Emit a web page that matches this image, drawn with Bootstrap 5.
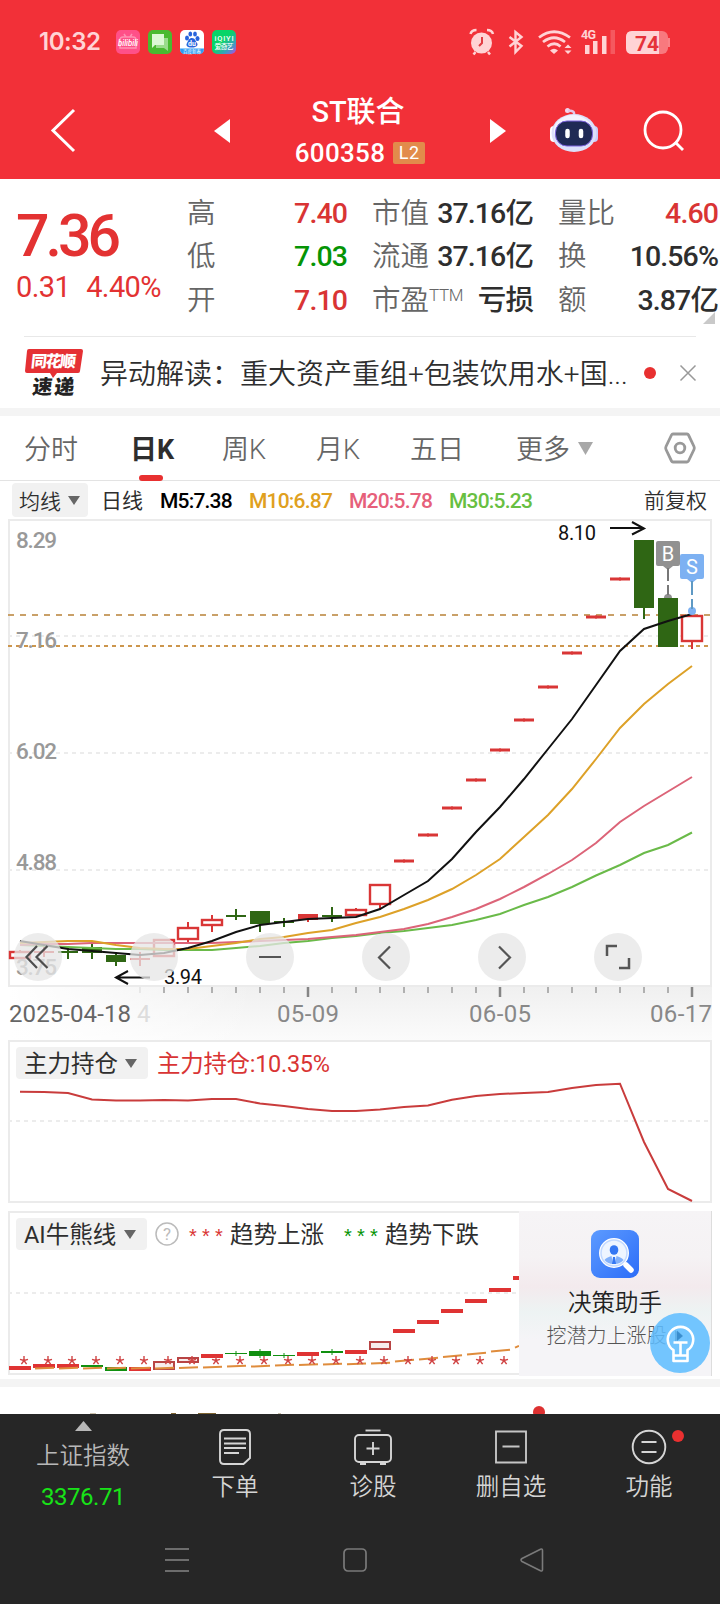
<!DOCTYPE html>
<html lang="zh-CN">
<head>
<meta charset="utf-8">
<meta name="viewport" content="width=device-width, initial-scale=1">
<title>ST联合 600358</title>
<link href="https://cdn.jsdelivr.net/npm/bootstrap@5.3.0/dist/css/bootstrap.min.css" rel="stylesheet">
<style>
body{width:720px;height:1604px;overflow:hidden;background:#fff;color:#2e2e2e;font-family:Roboto,"Noto Sans CJK SC",sans-serif;line-height:1}
svg{display:block;flex:none;overflow:visible}
.app-head{background:#f23038;height:179px}
.status-row{height:83px;padding:0 50px 0 39px;color:#ffd3d5}
.clock{font:600 24px Inter,Roboto,sans-serif;letter-spacing:-.5px;width:77px}
.head-row{height:96px;padding:0 35px 0 50px}
.stock-name{font-size:29px;font-weight:500;line-height:32px;margin-left:-4px}
.stock-code{font-size:26px;font-weight:500;letter-spacing:.3px}
.l2-tag{background:#e28b4b;border-radius:2px;width:32px;height:22px;font-size:18px;letter-spacing:.5px}
.quote-box{height:157px}
.price-col{width:187px;padding:32px 0 0 16px;color:#e33232}
.price-now{font-size:59px;font-weight:500;letter-spacing:-4px;line-height:50px}
.price-chg{font-size:29px;letter-spacing:-.6px;margin-top:10px;line-height:32px;gap:16px}
.q-col{padding-top:13px}
.q-line{height:43.6px;font-size:28.5px}
.q-line>span:first-child{color:#666;font-weight:350}
.q-val{font-weight:500;letter-spacing:-.9px}
.up{color:#d93434}.down{color:#059405}
.ttm{font-size:17px;position:relative;top:-9px;letter-spacing:-.3px}
.ticker{height:72px;margin:0 24px;border-top:1px solid #e8e8e8}
.ticker-text{font-size:28px;font-weight:350;margin-left:16px;width:531px;padding-top:4px}
.band{height:8px;background:#f4f4f4}
.k-tabs{height:65px;border-bottom:1px solid #e3e3e3;font-size:27px;color:#666;padding:0 24px 0 24px}
.k-tabs .nav-link{color:#666;padding:4px 0 0;font-weight:350}
.k-tabs .active{color:#2e2e2e;font-weight:700;position:relative}
.k-tabs .active::after{content:"";position:absolute;left:9px;top:42px;width:24px;height:6px;border-radius:3px;background:#e83030}
.ma-row{height:38px;font-size:21px;padding:0 13px 0 12px}
.ma-row>span:not(.pill){padding-top:2px}
.ma-row .ma{font-weight:500;letter-spacing:-.8px}
.pill{background:#f1f1f1;border-radius:4px}
.chart-box{position:relative;height:521px}
.tools{position:absolute;left:14px;top:414px;gap:68px}
.tool{width:48px;height:48px;border-radius:50%;background:rgba(230,230,230,.76);padding:0;border:0}
.sub-box{position:relative}
.legend-row{position:absolute;left:16px;top:7px;height:32px;font-size:23.5px;white-space:nowrap}
.legend-row .pill{height:32px}
.legend-row b,.legend-row>span:not(.pill){font-weight:400;position:relative;top:2px}
.legend-row>.stars{font:700 20px "Liberation Sans",sans-serif;letter-spacing:5.2px;top:5px}
.helper-card{position:absolute;left:519px;top:0;width:193px;height:165px;background:linear-gradient(#f6f4f6 0,#f5f2f4 28%,#f3eaed 46%,#edf3f3 61%,#f5f4f7 78%);border-right:1px solid #ddd}
.helper-name{font-size:23.5px;font-weight:350;margin-top:14px;color:#222}
.helper-tip{font-size:20px;font-weight:300;color:#555;margin-top:10px;margin-left:-2px;gap:8px}
.bulb{position:absolute;left:650px;top:102px}
.peek{height:27px;overflow:hidden;position:relative}
.peek i{position:absolute;left:533px;top:19px;width:12px;height:12px;border-radius:50%;background:#dd3131}
.peek b{position:absolute;top:26px;height:1px;background:#7d6330}
.bottom-bar{background:#262626;height:190px;color:#d5d5d5;font-size:23.5px;font-weight:350}
.bar-items{height:100px}
.bar-item{width:138px}
.bar-item>span{margin-top:11px}
.index-item{width:166px;color:#b8b8b8}
.index-val{color:#18e318;font-size:24px;font-weight:400;letter-spacing:-.5px;margin-top:16px}
.dot{position:absolute;width:12px;height:12px;border-radius:50%;background:#ea3030}
</style>
</head>
<body>
<header class="app-head">
  <div class="status-row d-flex align-items-center">
    <span class="clock">10:32</span>
    <svg width="121" height="24" viewBox="0 0 121 24">
      <defs><linearGradient id="iq" x1="0" y1="0" x2="1" y2="1"><stop offset=".45" stop-color="#08d468"/><stop offset=".75" stop-color="#3c9ebe"/><stop offset="1" stop-color="#bd43e5"/></linearGradient></defs>
      <rect width="24" height="24" rx="5" fill="#ff5088"/><path d="M8 4l2 3M16 4l-2 3M4 10q0-3 3-3h10q3 0 3 3v8H4z" fill="none" stroke="#ff91b3" stroke-width="1.500"/><text x="2" y="16" font-size="9" font-weight="500" font-style="italic" fill="#fff" textLength="20" lengthAdjust="spacingAndGlyphs">bilibili</text>
      <rect x="32" width="24" height="24" rx="5" fill="#49ba30"/><path d="M40 8h12v13l-4-3h-8z" fill="#9adc8c"/><path d="M36 4h12v11h-9l-3 3z" fill="#dcf8d5"/>
      <rect x="64" width="24" height="24" rx="5" fill="#fff"/><path d="M64 18.500h24q0 5.500-5 5.500H69q-5 0-5-5.500z" fill="#2c9cf4"/><g fill="#2864dc"><ellipse cx="71" cy="8" rx="2" ry="2.600"/><ellipse cx="74.300" cy="4" rx="1.900" ry="2.500"/><ellipse cx="79" cy="4" rx="1.900" ry="2.500"/><ellipse cx="81.500" cy="8.500" rx="2" ry="2.600"/><path d="M76 8c3 0 3.500 3 5 5s0 4.500-5 4.500-6.500-2-5-4.500 2-5 5-5z"/></g><text x="76" y="15.500" text-anchor="middle" font-size="7" font-weight="700" fill="#fff">du</text><text x="76" y="23" text-anchor="middle" font-size="4.500" fill="#fff">百度新春</text>
      <rect x="96" width="24" height="24" rx="5" fill="url(#iq)"/><text x="98.500" y="11" font-size="7.500" font-weight="500" fill="#fff" textLength="19">iQIYI</text><text x="98.500" y="19" font-size="7" font-weight="500" fill="#fff" textLength="19">爱奇艺</text>
    </svg>
    <svg class="ms-auto" width="201" height="26" viewBox="469 28 201 26" fill="none" stroke="#ffd3d5" stroke-width="2">
      <circle cx="481.500" cy="42" r="10.500" fill="#ffd3d5" stroke="none"/><path d="M470.500 33q1-4 6-4M493 33q-1-4-6-4M475.500 51l-2 2.500M488 51l2 2.500" stroke-width="2.500"/><path d="M482 36v6l-3 3" stroke="#e23b42"/>
      <path d="M509.500 36l12 9-6 6V31l6 5-12 9.500" stroke-width="2.400"/>
      <path d="M539 36.500q15-11.500 31 0M543 41q11-8.500 22 0M547.500 45.500q7-5.500 13 0" stroke-width="2.700"/><path d="M550 49.500q4-3.500 8 0l-4 3.500z" fill="#ffd3d5" stroke="none"/><path d="M564.500 47l3.500-3.500 3.500 3.500zM564.500 49.500l3.500 3.500 3.500-3.500z" fill="#ffd3d5" stroke="none"/>
      <g fill="#ffd3d5" stroke="none"><text x="581" y="38" font-size="12.500" font-weight="700" textLength="15">4G</text><path d="M585 44h4.500v9H585zM593 40h4.500v13H593zM602 35h4.500v18H602z"/><path d="M610.500 29h4.500v24h-4.500z" opacity=".25"/>
      <rect x="626" y="30" width="42" height="23" rx="6" opacity=".45"/><path d="M632 30h27v23h-27q-6 0-6-6V36q0-6 6-6z"/><path d="M668 37h2v9h-2z" opacity=".5"/></g>
      <text x="635" y="49.500" font-size="21" font-weight="700" fill="#e5323a" stroke="none" textLength="24">74</text>
    </svg>
  </div>
  <div class="head-row d-flex align-items-center text-white">
    <svg style="margin-top:-3px" width="26" height="44" viewBox="0 0 26 44" fill="none" stroke="#fff" stroke-width="3"><path d="M24 2L3 22.500 24 43"/></svg>
    <svg style="margin-left:138px" width="16" height="24" viewBox="0 0 16 24" fill="#fff"><path d="M0 12L16 0v24z"/></svg>
    <div class="text-center" style="width:260px">
      <div class="stock-name">ST联合</div>
      <div class="d-flex justify-content-center align-items-center gap-2" style="margin-top:12px"><span class="stock-code">600358</span><span class="l2-tag d-inline-flex align-items-center justify-content-center">L2</span></div>
    </div>
    <svg width="16" height="24" viewBox="0 0 16 24" fill="#fff"><path d="M16 12L0 0v24z"/></svg>
    <svg style="margin-left:43px" width="50" height="46" viewBox="549 107 50 46">
      <circle cx="567.500" cy="109.500" r="2.500" fill="#f2d6ee"/><path d="M568 110q7-1 6 4" fill="none" stroke="#e5c6e8" stroke-width="2.500"/>
      <rect x="550" y="125" width="8" height="16" rx="4" fill="#fff"/><rect x="590" y="125" width="8" height="16" rx="4" fill="#c9cdfa"/>
      <ellipse cx="574" cy="132" rx="22.500" ry="19" fill="#dce0fa"/><ellipse cx="573" cy="129" rx="19" ry="15" fill="#f4f3ff"/>
      <rect x="555.500" y="120" width="37" height="25" rx="11.500" fill="#202a55" stroke="#7c63df"/>
      <path d="M567.500 130v5M581 130v5" stroke="#fff" stroke-width="4.500" stroke-linecap="round"/>
    </svg>
    <svg class="ms-auto" width="42" height="42" viewBox="643 110 42 42" fill="none" stroke="#fff" stroke-width="2.800"><circle cx="663" cy="130" r="18"/><path d="M675 142l8 8"/></svg>
  </div>
</header>

<section class="quote-box d-flex position-relative">
  <div class="price-col"><div class="price-now">7.36</div><div class="price-chg d-flex"><span>0.31</span><span>4.40%</span></div></div>
  <div class="q-col" style="width:160px">
    <div class="q-line d-flex align-items-center justify-content-between"><span>高</span><span class="q-val up">7.40</span></div>
    <div class="q-line d-flex align-items-center justify-content-between"><span>低</span><span class="q-val down">7.03</span></div>
    <div class="q-line d-flex align-items-center justify-content-between"><span>开</span><span class="q-val up">7.10</span></div>
  </div>
  <div class="q-col" style="width:161px;margin-left:25px">
    <div class="q-line d-flex align-items-center justify-content-between"><span>市值</span><span class="q-val">37.16亿</span></div>
    <div class="q-line d-flex align-items-center justify-content-between"><span>流通</span><span class="q-val">37.16亿</span></div>
    <div class="q-line d-flex align-items-center justify-content-between"><span>市盈<span class="ttm">TTM</span></span><span class="q-val">亏损</span></div>
  </div>
  <div class="q-col" style="width:160px;margin-left:25px">
    <div class="q-line d-flex align-items-center justify-content-between"><span>量比</span><span class="q-val up">4.60</span></div>
    <div class="q-line d-flex align-items-center justify-content-between"><span>换</span><span class="q-val">10.56%</span></div>
    <div class="q-line d-flex align-items-center justify-content-between"><span>额</span><span class="q-val">3.87亿</span></div>
  </div>
  <svg class="position-absolute" style="right:5px;bottom:12px" width="12" height="12"><path d="M12 0v12H0z" fill="#c9c9c9"/></svg>
</section>

<section class="ticker d-flex align-items-center">
  <svg width="60" height="50" viewBox="24 347 60 50"><path d="M29 348h52q2 0 2 2l-3 20q0 2-2 2H57l-4 5-3-5H27q-2 0-2-2l2-20q0-2 2-2z" fill="#e53034"/><g transform="skewX(-6)" font-weight="900" font-family="Noto Sans CJK SC"><text x="69" y="366" font-size="16" fill="#fff" textLength="45">同花顺</text><text x="73" y="393.500" font-size="20" fill="#222" textLength="42">速递</text></g></svg>
  <div class="ticker-text text-nowrap">异动解读：重大资产重组+包装饮用水+国...</div>
  <svg style="margin-left:13px" width="12" height="12"><circle cx="6" cy="6" r="6" fill="#e83030"/></svg>
  <svg class="ms-auto" width="16" height="16" fill="none" stroke="#999" stroke-width="1.500"><path d="M.5.500l15 15M15.500.500l-15 15"/></svg>
</section>
<div class="band"></div>

<nav class="k-tabs nav d-flex align-items-center flex-nowrap">
  <a class="nav-link" style="width:106px">分时</a>
  <a class="nav-link active" style="width:92px">日K</a>
  <a class="nav-link" style="width:94px">周K</a>
  <a class="nav-link" style="width:94px">月K</a>
  <a class="nav-link" style="width:106px">五日</a>
  <a class="nav-link d-flex align-items-center gap-2">更多 <svg style="margin-top:-4px" width="15" height="13"><path d="M0 0h15L7.500 13z" fill="#a8a8a8"/></svg></a>
  <svg class="ms-auto" width="32" height="32" viewBox="0 0 32 32" fill="none" stroke="#999" stroke-width="2.800"><path d="M9 2h14q1 0 1.500 1L30 14.500q.7 1.500 0 3L24.500 29q-.5 1-1.500 1H9q-1 0-1.500-1L2 17.500q-.7-1.500 0-3L7.500 3Q8 2 9 2z"/><circle cx="16" cy="16" r="4.800"/></svg>
</nav>

<div class="ma-row d-flex align-items-center">
  <span class="pill d-flex align-items-center" style="width:76px;height:34px;padding-left:7px;gap:7px;font-weight:350"><span class="pt-1">均线</span><svg width="12" height="9"><path d="M0 0h12L6 9z" fill="#666"/></svg></span>
  <span style="width:59px;margin-left:13px">日线</span>
  <span class="ma text-black" style="width:89px">M5:7.38</span>
  <span class="ma" style="width:100px;color:#e0a020">M10:6.87</span>
  <span class="ma" style="width:100px;color:#e6607a">M20:5.78</span>
  <span class="ma" style="color:#68bf42">M30:5.23</span>
  <span class="ms-auto" style="font-weight:350">前复权</span>
</div>

<section class="chart-box">
  <svg id="kline" width="720" height="521" viewBox="0 519 720 521" font-family="Roboto"></svg>
  <div class="tools d-flex">
    <button class="tool"><svg width="48" height="48" fill="none" stroke="#4d4d4d" stroke-width="2.200"><path d="M23 13L12.500 24 23 35M33.500 13L22.500 24l11 11"/></svg></button>
    <button class="tool" aria-label="加"></button>
    <button class="tool"><svg width="48" height="48"><path d="M13 23h22v2H13z" fill="#555"/></svg></button>
    <button class="tool"><svg width="48" height="48" fill="none" stroke="#555" stroke-width="2.200"><path d="M28 13.500L17 24.500l11 11"/></svg></button>
    <button class="tool"><svg width="48" height="48" fill="none" stroke="#555" stroke-width="2.200"><path d="M21 13.500l11 11-11 11"/></svg></button>
    <button class="tool"><svg width="48" height="48" fill="none" stroke="#555" stroke-width="2.500"><path d="M13 23V13h10M35 25v10H25"/></svg></button>
  </div>
</section>

<section class="sub-box" style="height:171px">
  <svg id="hold" width="720" height="171" viewBox="0 1040 720 171"></svg>
  <div class="legend-row d-flex align-items-center">
    <span class="pill d-flex align-items-center" style="width:132px;padding-left:8px;gap:7px"><b>主力持仓</b><svg width="12" height="9"><path d="M0 0h12L6 9z" fill="#666"/></svg></span>
    <span class="up" style="margin-left:9px;letter-spacing:-.3px">主力持仓:10.35%</span>
  </div>
</section>

<section class="sub-box" style="height:168px">
  <svg id="trend" width="720" height="168" viewBox="0 1211 720 168"></svg>
  <div class="legend-row d-flex align-items-center">
    <span class="pill d-flex align-items-center" style="width:131px;padding-left:8px;gap:8px"><b>AI牛熊线</b><svg width="12" height="9"><path d="M0 0h12L6 9z" fill="#666"/></svg></span>
    <svg style="margin-left:8px" width="24" height="24"><circle cx="12" cy="12" r="11" fill="none" stroke="#bbb" stroke-width="1.500"/><text x="12" y="18" text-anchor="middle" font-size="17" fill="#bbb">?</text></svg>
    <span class="stars up" style="margin-left:10px;width:41px">***</span><span style="width:114px">趋势上涨</span>
    <span class="stars down" style="width:41px">***</span><span>趋势下跌</span>
  </div>
  <div class="helper-card d-flex flex-column align-items-center" style="padding-top:19px">
    <svg width="48" height="48" viewBox="0 0 48 48"><defs><linearGradient id="hb" x1="0" y1="0" x2="1" y2="1"><stop stop-color="#5c9bff"/><stop offset="1" stop-color="#2c6df8"/></linearGradient></defs><rect width="48" height="48" rx="9" fill="url(#hb)"/><path d="M35 35l5 5" stroke="#fff" stroke-width="5.500" stroke-linecap="round"/><circle cx="23" cy="23" r="14" fill="#eef5ff" stroke="#fff" stroke-width="2"/><circle cx="23" cy="23" r="13" fill="none" stroke="#c2d9ff" stroke-width="1.500"/><ellipse cx="23" cy="20" rx="4.300" ry="4.800" fill="#3477f3"/><path d="M13.500 30q1-2 7-4l1.500 8q-5 0-8.500-4zM32.500 30q-1-2-7-4L24 34q5 0 8.500-4z" fill="#82b1fb"/><path d="M22 27h2l1 7h-4z" fill="#3477f3"/></svg>
    <div class="helper-name">决策助手</div>
    <div class="helper-tip d-flex align-items-center text-nowrap"><span>挖潜力上涨股</span><svg width="7" height="12"><path d="M0 0l7 6-7 6z" fill="#666"/></svg></div>
  </div>
  <svg class="bulb" width="60" height="60" viewBox="0 0 60 60"><circle cx="30" cy="30" r="30" fill="#5dbdff" fill-opacity=".86"/><path d="M27 17.500l6 5.500-6 5z" fill="#2b7fc0" opacity=".7"/><g fill="none" stroke="#fff" stroke-width="2.600" stroke-linejoin="round"><path d="M23.500 39.500v-2.300a12.700 12.700 0 1 1 14 0v2.300M23.500 38v10h14V38M23.500 42.500h14M23.500 29.500h14M30.500 29.500v13"/></g></svg>
</section>
<div class="band"></div>
<div class="peek"><b style="left:90px;width:6px;opacity:.4"></b><b style="left:171px;width:5px"></b><b style="left:198px;width:18px"></b><b style="left:278px;width:3px;opacity:.4"></b><i></i></div>

<footer class="bottom-bar">
  <div class="bar-items d-flex">
    <div class="index-item d-flex flex-column align-items-center"><svg style="margin-top:7px" width="17" height="10"><path d="M8.500 0L17 10H0z" fill="#b8b8b8"/></svg><span style="margin-top:14px">上证指数</span><span class="index-val">3376.71</span></div>
    <div class="bar-item d-flex flex-column align-items-center"><svg style="margin-top:15px" width="32" height="36" viewBox="0 0 32 36" fill="none" stroke="#d5d5d5" stroke-width="1.900"><path d="M5 1h22q4 0 4 4v24l-6.500 6H5q-4 0-4-4V5q0-4 4-4zM5 9.500h22M5 14.500h22M5 19h22M5 24h15"/></svg><span>下单</span></div>
    <div class="bar-item d-flex flex-column align-items-center"><svg style="margin-top:15px" width="38" height="36" viewBox="0 0 38 36" fill="none" stroke="#d5d5d5" stroke-width="1.900"><path d="M11.500 1.500h15"/><rect x="1" y="6" width="36" height="27" rx="4"/><path d="M12.500 19.500h13M19 13v13M6 35h6M26 35h6"/></svg><span>诊股</span></div>
    <div class="bar-item d-flex flex-column align-items-center"><svg style="margin-top:15px" width="32" height="36" viewBox="0 0 32 36" fill="none" stroke="#c5c5c5" stroke-width="1.900"><path d="M1 2.500h30v31H1zM7.500 17.500h17"/></svg><span>删自选</span></div>
    <div class="bar-item d-flex flex-column align-items-center position-relative"><svg style="margin-top:15px" width="36" height="36" viewBox="0 0 36 36" fill="none" stroke="#d5d5d5" stroke-width="1.900"><circle cx="18" cy="18" r="16.300"/><path d="M10.500 13h15M10.500 23h15"/></svg><span>功能</span><i class="dot" style="left:92px;top:16px"></i></div>
  </div>
  <div class="d-flex align-items-center" style="height:92px;padding-left:165px">
    <svg width="24" height="24" stroke="#858585" stroke-width="1.700"><path d="M0 1h24M0 12h24M0 23h24"/></svg>
    <svg style="margin-left:154px" width="24" height="24" fill="none" stroke="#7a7a7a" stroke-width="1.700"><rect x="1" y="1" width="22" height="22" rx="4"/></svg>
    <svg style="margin-left:153px" width="24" height="24" fill="none" stroke="#7a7a7a" stroke-width="1.600" stroke-linejoin="round"><path d="M2 10.500L20.500 1.200Q22.500.500 22.500 2.500V21.500Q22.500 23.500 20.500 22.800L2 13.500Q0 12 2 10.500z"/></svg>
  </div>
</footer>

<script>
const RED='#d93636',GREEN='#2f6614';
const x=i=>20+i*24;
const dash=(y,c,d,w=2,x2=711)=>`<path d="M8 ${y}H${x2}" stroke="${c}" stroke-width="${w}" stroke-dasharray="${d}"/>`;
const frame=(t,b)=>`<path d="M9 ${t}H711V${b}H9z" fill="none" stroke="#ebebeb" stroke-width="2"/>`;
const poly=(p,c,w=2)=>`<polyline points="${p}" fill="none" stroke="${c}" stroke-width="${w}"/>`;
const txt=(s,tx,y,w,size,c,wt=500)=>`<text x="${tx}" y="${y}" textLength="${w}" font-size="${size}" font-weight="${wt}" fill="${c}">${s}</text>`;

// candle: kind (h hollow, r red fill, g green fill), top, bottom, high, low
const candles=[['h',952,958,950,958],['r',951,953,945,957],['g',951,953,946,959],['g',947,953,943,959],['g',955,962,953,966],['r',958,960,952,966],['h',940,956,940,956],['h',928,939,922,942],['h',920,925,915,932],['g',915,917,909,920],['g',911,924,911,932],['g',921,923,918,927],['r',914,920,914,922],['g',915,917,907,922],['h',910,915,908,915],['h',885,904,885,910],['r',859.5,862.5],['r',833.5,836.5],['r',806.5,809.5],['r',778.5,781.5],['r',748.5,751.5],['r',718.5,721.5],['r',685.5,688.5],['r',651.5,654.5],['r',615.5,618.5],['r',577.500,580.500],['g',540,608,540,619],['g',598,647,598,647],['h',616,641,616,649]];
const candle=([k,t,b,hi=t,lo=b],i)=>{
  const c=k=='g'?GREEN:RED;
  const body=k=='h'?`<rect x="${x(i)-10}" y="${t}" width="20" height="${b-t}" fill="#fff" stroke="${c}" stroke-width="2.400"/>`:`<rect x="${x(i)-10}" y="${t}" width="20" height="${b-t}" fill="${c}"/>`;
  return `<path d="M${x(i)} ${hi}V${lo}" stroke="${c}" stroke-width="2"/>`+body;
};
const line=ys=>ys.map((y,i)=>x(i)+','+y).join(' ');
const ma5=[941,945,949,951,953,955,953,948,941,932,925,922,919,918,917,909,895,881,859,832,807,779,749,719,685,651,629,621,614];
const ma10=[943,942,941,941,945,948,949,949,946,943,939,937,933,930,923,917,909,900,889,875,859,837,815,789,759,728,704,684,666];
const ma20=[945,944,944,943,943,943,943,943,943,942,941,940,939,937,935,932,929,924,917,909,899,887,874,860,843,822,806,791.5,777];
const ma30=[945,946,947,948,949,949,950,950,950,948,946,943,941,938,936,933,931,928,925,920,914,905,897,887,875.5,865,853,845,832.5];
let ticks='';
for(let i=5;i<29;i++){const major=i%8==4;ticks+=`<path d="M${x(i)} 987V${major?997:993}" stroke="${i<6?'#ddd':'#858585'}" stroke-width="${major?2.5:1.2}"/>`}
document.getElementById('kline').innerHTML=
 `<defs><linearGradient id="fog" y1="0" y2="1" x1="0" x2="0"><stop stop-color="#f0f0f0"/><stop offset="1" stop-color="#fbfbfb"/></linearGradient><linearGradient id="fogx"><stop stop-color="#fff"/><stop offset=".35" stop-color="#fff" stop-opacity="0"/></linearGradient></defs>
 <path d="M9 987h703v53H9z" fill="url(#fog)"/><path d="M9 987h703v53H9z" fill="url(#fogx)"/>`
 +frame(520,986)+[636,753,870].map(y=>dash(y,'#ececec','4 4')).join('')
 +dash(615,'#c9a068','6 6')+dash(646,'#cc964d','4 4')
 +[['8.29',547.5],['7.16',647.5],['6.02',758.5],['4.88',869.5],['3.75',975]].map(a=>txt(a[0],16,a[1],41,22.5,'#999')).join('')
 +candles.map(candle).join('')
 +poly(line(ma30),'#6aba49')+poly(line(ma20),'#dc6478')+poly(line(ma10),'#dda128')+poly(line(ma5),'#111')
 +txt('8.10',558,539.5,38,20,'#111',400)+txt('3.94',164,984,38,20,'#111',400)
 +`<g fill="none" stroke="#111" stroke-width="2"><path d="M610 528h33M632 522l12 6.500-12 6"/><path d="M150 977.500h-33M128 971l-12 6.500 12 6.500"/></g>
 <g fill="#919191"><rect x="656" y="541" width="24" height="25" rx="2"/><path d="M663 566h10l-5 4zM664 598a4 4 0 0 1 8 0z"/></g><path d="M668 568v13M668 585v10" stroke="#777" stroke-width="2"/><text x="668" y="561" text-anchor="middle" font-size="20" fill="#fff">B</text>
 <g fill="#7db1f2"><rect x="680" y="554" width="24" height="25" rx="2"/><path d="M687 579h10l-5 4z"/><circle cx="692" cy="611" r="4"/></g><path d="M692 581v14M692 599v10" stroke="#5e99c4" stroke-width="2"/><text x="692" y="574" text-anchor="middle" font-size="20" fill="#fff">S</text>`
 +ticks
 +txt('2025-04-18',9,1022,122,24,'#666',400)+txt('4',137,1022,11,24,'#ddd',400)+txt('05-09',277,1022,62,24,'#888',400)+txt('06-05',469,1022,62,24,'#888',400)+txt('06-17',650,1022,62,24,'#888',400);

const hold=[1091.7,1092,1093,1099.5,1100.5,1100.5,1100,1100.5,1099,1099,1103.5,1106,1109,1111,1111,1109.5,1107,1105.5,1099.7,1096,1094,1093,1092,1088,1085,1083.7,1142,1189,1201];
document.getElementById('hold').innerHTML=frame(1041,1202)+dash(1121,'#ececec','4 4')+poly(line(hold),'#c93c3c');

// trend bars: kind, top, bottom
const bars=[['r',1366,1370],['r',1364,1368],['r',1364,1368],['g',1365,1367],['g',1367,1371],['r',1367,1371],['h',1362,1369],['h',1358,1362],['r',1354,1358],['g',1353,1354],['g',1351,1356],['g',1355,1356],['r',1352,1356],['g',1351,1353],['r',1350,1354],['h',1342,1349],['r',1329,1333],['r',1320,1324],['r',1309,1313],['r',1299,1303],['r',1288,1292],['r',1276,1280]];
const base=[1368,1368,1368,1368,1368,1368,1368,1367.5,1367,1366,1366,1365,1364.5,1364,1363.7,1363,1361,1359,1356.5,1354,1351,1347];
let t=frame(1212,1374)+dash(1293,'#ececec','4 4',2,519);
bars.forEach(([k,a,b],i)=>{
  const c=k=='g'?'#109010':'#df3333', w=i==21?6:22;
  t+=k=='h'?`<rect x="${x(i)-10}" y="${a}" width="20" height="${b-a}" fill="#f7ecec" stroke="#b84444" stroke-width="2"/>`:`<rect x="${x(i)-11}" y="${a}" width="${w}" height="${b-a}" fill="${c}"/>`;
  if([9,10,11,13].includes(i))t+=`<path d="M${x(i)} ${a-2}V${b+2}" stroke="${c}"/>`;
  if(i)t+=`<path d="M${x(i)-9} ${base[i]+.6}L${x(i)+(i==21?-5:10)} ${base[i]-(i>15?1.2:.2)}" stroke="#df8c3c" stroke-width="2"/>`;
  if(i<21)t+=`<path d="M${x(i)+4} 1360.500v-4.500m0 4.500l-4-1.200m4 1.200l4-1.200m-4 1.200l-2.600 3.700m2.600-3.700l2.600 3.700" stroke="#d04444" stroke-width="1.400" fill="none"/>`;
});
document.getElementById('trend').innerHTML=t;
</script>
<script src="https://cdn.jsdelivr.net/npm/bootstrap@5.3.0/dist/js/bootstrap.bundle.min.js"></script>
</body>
</html>
